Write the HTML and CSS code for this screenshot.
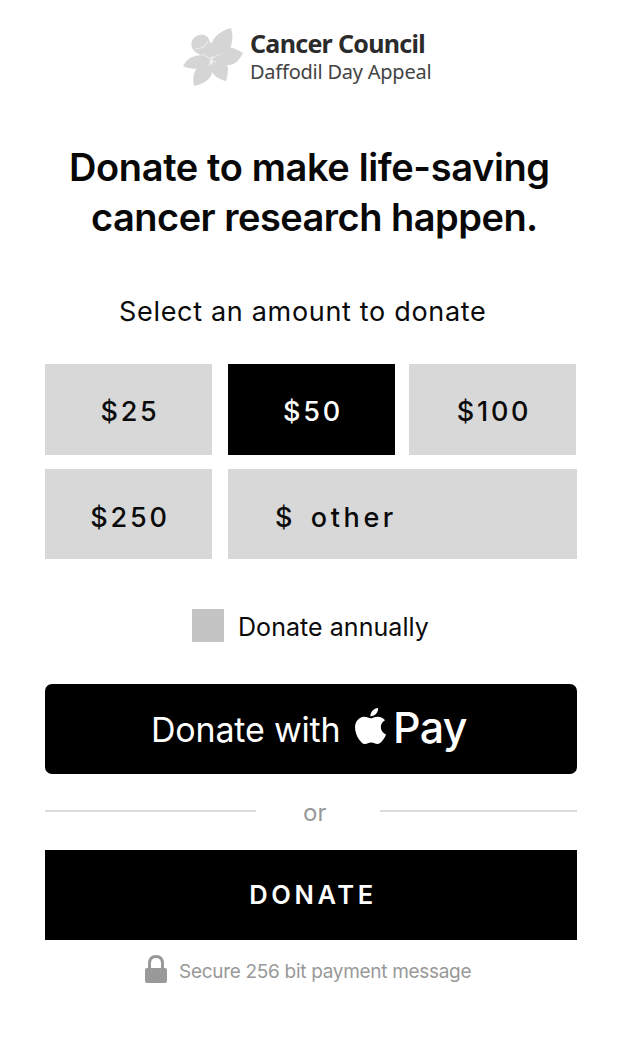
FILE: index.html
```html
<!DOCTYPE html>
<html lang="en">
<head>
<meta charset="utf-8">
<title>Daffodil Day Appeal</title>
<link rel="stylesheet" href="styles.css">
</head>
<body>
<main class="page">
  <header class="brand">
    <svg class="flower" viewBox="0 0 60 60" aria-hidden="true">
      <path d="M27 24C27 11 36 3 48 0C51 9 49 20 44 25C39 28 33 27 30 29Z"/>
      <path d="M29 30C36 27 38 20 47 19.500C52 20 56 23 60 25C57 31 52 37 46 37C40 38 35 35 29 33Z"/>
      <path d="M30 32C38 34 45 34 45 41C45 46 44 50 43 53C35 51 29 47 28 40Z"/>
      <path d="M26 32C34 44 27 55 11 58C9 48 11 38 23 33Z"/>
      <path d="M28 31C22 41 10 43 0 38C5 28 17 24 28 30Z"/>
      <path d="M27 30C19 28 7 24 8.500 15C11 4 25 5 26 12C27 15 32 17 32 27Z"/>
      <path class="vein" d="M19 26L28 31L37 26M28 31L26 38M28 31L33 35M12 21C19 21 23 18 25 13"/>
    </svg>
    <div class="brand-text">
      <div class="brand-name">Cancer Council</div>
      <div class="brand-sub">Daffodil Day Appeal</div>
    </div>
  </header>
  <h1 class="title"><span class="line-one">Donate to make life-saving</span><br><span class="line-two">cancer research happen.</span></h1>
  <p class="prompt">Select an amount to donate</p>
  <section class="amounts">
    <button class="amount">$25</button>
    <button class="amount selected">$50</button>
    <button class="amount">$100</button>
    <button class="amount low">$250</button>
    <button class="amount low other">$ other</button>
  </section>
  <label class="annual"><span class="box"></span><span class="annual-text">Donate annually</span></label>
  <button class="apple-pay">
    <span class="with">Donate with</span>
    <svg class="apple" viewBox="2.2 0 19.6 24" preserveAspectRatio="none" aria-hidden="true"><path d="M12.152 6.896c-.948 0-2.415-1.078-3.96-1.04-2.04.027-3.91 1.183-4.961 3.014-2.117 3.675-.546 9.103 1.519 12.09 1.013 1.454 2.208 3.09 3.792 3.039 1.52-.065 2.09-.987 3.935-.987 1.831 0 2.35.987 3.96.948 1.637-.026 2.676-1.48 3.676-2.948 1.156-1.688 1.636-3.325 1.662-3.415-.039-.013-3.182-1.221-3.22-4.857-.026-3.04 2.48-4.494 2.597-4.559-1.429-2.09-3.623-2.324-4.39-2.376-2-.156-3.675 1.09-4.61 1.09zM15.53 3.83c.843-1.012 1.4-2.427 1.245-3.83-1.207.052-2.662.805-3.532 1.818-.78.896-1.454 2.338-1.273 3.714 1.338.104 2.715-.688 3.559-1.701"/></svg>
    <span class="pay">Pay</span>
  </button>
  <div class="divider"><span class="rule"></span><span class="or">or</span><span class="rule"></span></div>
  <button class="donate">DONATE</button>
  <footer class="secure">
    <svg class="lock" viewBox="0 0 22 28" aria-hidden="true"><rect x="0" y="13" width="22" height="15" rx="2"/><path class="shackle" d="M4.500 14V8.500C4.500 4 7 1.500 11 1.500S17.500 4 17.500 8.500V14"/></svg>
    <span>Secure 256 bit payment message</span>
  </footer>
</main>
</body>
</html>
```
FILE: styles.css
```css
* { box-sizing: border-box; }
body { margin: 0; background: #fff; color: #0a0a0a; font-family: Inter, "Liberation Sans", sans-serif; }
button { border: 0; padding: 0; margin: 0; font: inherit; color: inherit; }
.page { width: 618px; height: 1037px; padding: 28px 41px 0 45px; display: flex; flex-direction: column; white-space: nowrap; overflow: hidden; }
.brand { display: flex; height: 60px; padding-left: 138px; }
.flower { width: 60px; height: 60px; fill: #d5d5d5; }
.vein { fill: none; stroke: #e8e8e8; stroke-width: 1.2; }
.brand-text { padding-left: 7px; font-family: "Noto Sans", sans-serif; }
.brand-name { height: 29px; line-height: 31px; font-size: 25px; font-weight: 700; letter-spacing: -0.7px; color: #2b2b2b; }
.brand-sub { height: 29px; line-height: 30px; font-size: 20px; letter-spacing: -0.23px; color: #444; }
.title { margin: 54px 0 0; font-size: 38px; line-height: 50px; font-weight: 600; color: #080808; }
.line-one { margin-left: 24px; letter-spacing: -0.38px; }
.line-two { margin-left: 46px; letter-spacing: -0.52px; }
.prompt { margin: 50px 0 0; padding-left: 74px; height: 40px; line-height: 40px; font-size: 27px; letter-spacing: 0.68px; }
.amounts { display: grid; grid-template-columns: 168px 166px 168px; grid-template-rows: 91px 90px; column-gap: 15px; row-gap: 14px; margin-top: 32px; }
.amount { width: 167px; background: #d8d8d8; font-size: 27px; font-weight: 500; letter-spacing: 2.8px; padding: 3px 0 0 3px; }
.amount.selected { background: #000; color: #fff; }
.amount.low { padding-top: 6px; }
.amount.other { grid-column: 2 / 4; width: 349px; text-align: left; padding-left: 47px; letter-spacing: 3.6px; word-spacing: 4px; }
.annual { display: flex; align-items: center; gap: 14px; height: 33px; margin: 50px 0 0 147px; font-size: 25px; line-height: 35px; letter-spacing: 0.05px; }
.annual-text { padding-top: 4px; }
.box { width: 32px; height: 33px; background: #c4c4c4; }
.apple-pay { display: flex; align-items: center; height: 90px; margin-top: 42px; padding-left: 106px; border-radius: 7px; background: #000; color: #fff; }
.with { width: 204px; padding-top: 2px; text-align: left; font-size: 34px; line-height: 50px; letter-spacing: -0.2px; }
.apple { width: 31px; height: 36px; margin-bottom: 6px; fill: #fff; }
.pay { margin: -5px 0 0 7px; font-size: 43px; font-weight: 500; line-height: 52px; letter-spacing: -0.7px; }
.divider { display: grid; grid-template-columns: 211px 1fr 197px; align-items: center; height: 76px; padding-bottom: 2px; color: #999; }
.rule { height: 2px; background: #dcdcdc; }
.or { padding: 2px 0 0 47px; font-size: 24px; }
.donate { height: 90px; background: #000; color: #fff; font-size: 25.5px; font-weight: 600; letter-spacing: 3.6px; padding: 0 0 2px 4px; }
.secure { display: flex; height: 44px; padding: 15px 0 0 100px; gap: 12px; color: #999; font-size: 19px; line-height: 34px; letter-spacing: -0.3px; }
.lock { width: 22px; height: 28px; fill: #999; }
.shackle { fill: none; stroke: #999; stroke-width: 3; }
```
